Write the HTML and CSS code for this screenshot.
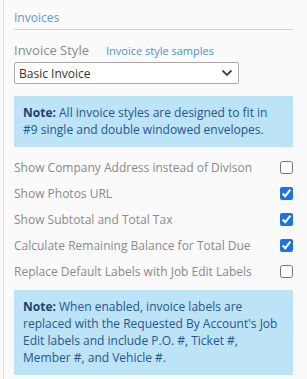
FILE: index.html
```html
<!DOCTYPE html>
<html lang="en">

<head>
    <meta charset="UTF-8">
    <meta name="viewport" content="width=device-width, initial-scale=1.0">
    <title>Invoices</title>
    <link rel="stylesheet" href="styles.css">
</head>

<body>
    <div class="panel">
        <h3 class="section-title">Invoices</h3>

        <div class="style-row">
            <span class="field-label">Invoice Style</span>
            <a href="#" class="samples-link">Invoice style samples</a>
        </div>
        <div class="select-box">
            <span>Basic Invoice</span>
            <svg width="12" height="8" viewBox="0 0 12 8"><path d="M1.5 1.5 L6 6 L10.5 1.5" fill="none" stroke="#444" stroke-width="1.8"/></svg>
        </div>

        <div class="note">
            <span class="note-title">Note:</span> All invoice styles are designed to fit in #9 single and double windowed envelopes.
        </div>

        <div class="options">
            <label class="option">Show Company Address instead of Divison <input type="checkbox"></label>
            <label class="option">Show Photos URL <input type="checkbox" checked></label>
            <label class="option">Show Subtotal and Total Tax <input type="checkbox" checked></label>
            <label class="option">Calculate Remaining Balance for Total Due <input type="checkbox" checked></label>
            <label class="option">Replace Default Labels with Job Edit Labels <input type="checkbox"></label>
        </div>

        <div class="note">
            <span class="note-title">Note:</span> When enabled, invoice labels are replaced with the Requested By Account's Job Edit labels and include P.O. #, Ticket #, Member #, and Vehicle #.
        </div>
    </div>
</body>
</html>
```

FILE: styles.css
```css
body {
    font-family: "Open Sans", "Noto Sans", sans-serif;
    background-color: #fafafa;
    margin: 0;
    padding: 0;
}

.panel {
    margin-left: 3px;
    border-left: 1px solid #e0e0e0;
    padding: 9px 13px 0 10px;
    width: 279px;
    min-height: 379px;
}

.section-title {
    font-size: 12px;
    font-weight: normal;
    color: #5b9bd5;
    margin: 0;
    padding-bottom: 3px;
    border-bottom: 1px solid #d2d2d2;
}

.style-row {
    display: flex;
    align-items: baseline;
    gap: 17px;
    margin-top: 11px;
}

.field-label {
    font-size: 13px;
    color: #8a8a8a;
}

.samples-link {
    font-size: 11px;
    color: #4a90d0;
    text-decoration: none;
}

.select-box {
    display: flex;
    justify-content: space-between;
    align-items: center;
    width: 214px;
    height: 20px;
    padding: 0 5px 0 4px;
    margin-top: 3px;
    background: white;
    border: 1px solid #a9a9a9;
    border-radius: 2px;
    font-size: 12px;
    color: #333;
}

.note {
    margin-top: 12px;
    background-color: #bde3f7;
    color: #24568f;
    padding: 8px 9px 9px;
    font-size: 12px;
    line-height: 17px;
}

.note-title {
    font-weight: bold;
    color: #1f4170;
}

.options {
    margin-top: 7px;
    margin-bottom: -6px;
}

.option {
    display: flex;
    justify-content: space-between;
    align-items: center;
    height: 26px;
    font-size: 12px;
    color: #8a8a8a;
}

.option input {
    margin: 0;
    width: 13px;
    height: 13px;
    accent-color: #1a73e8;
}
```
